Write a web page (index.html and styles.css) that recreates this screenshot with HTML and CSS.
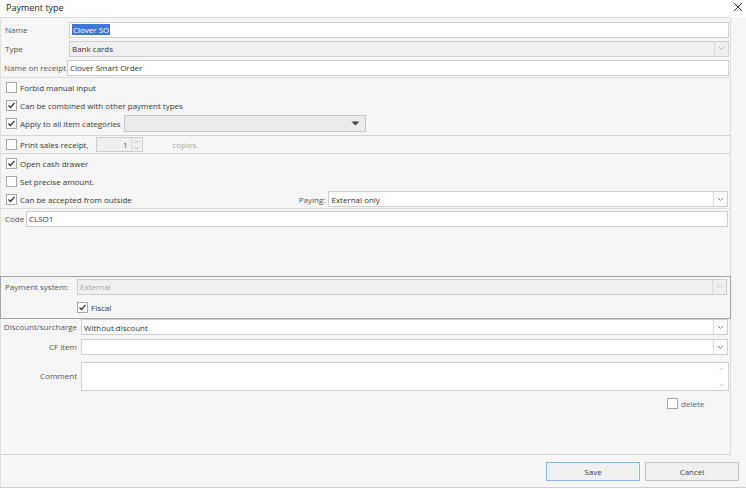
FILE: index.html
```html
<!DOCTYPE html>
<html>
<head>
<meta charset="utf-8">
<link rel="stylesheet" href="styles.css">
</head>
<body>
<div class="window">
  <div class="titlebar">
    <span class="title">Payment type</span>
    <svg class="close" width="10" height="10" viewBox="0 0 10 10"><path d="M1 1L9 9M9 1L1 9" stroke="#333" stroke-width="1" fill="none"/></svg>
  </div>
  <div class="body">
    <div class="panel">
      <div class="row top">
        <span class="lbl w-name">Name</span>
        <div class="field"><span class="sel">Clover SO</span></div>
      </div>
      <div class="row top">
        <span class="lbl w-name">Type</span>
        <div class="field disabled combo"><span class="val">Bank cards</span><span class="btn"><svg width="7" height="5" viewBox="0 0 7 5"><path d="M1 1L3.5 3.5L6 1" stroke="#bbb" fill="none"/></svg></span></div>
      </div>
      <div class="row top">
        <span class="lbl w-rcpt">Name on receipt</span>
        <div class="field"><span class="val">Clover Smart Order</span></div>
      </div>

      <div class="section sec1">
        <div class="crow"><span class="cb"></span><span class="ctext">Forbid manual input</span></div>
        <div class="crow"><span class="cb on"><svg width="9" height="9" viewBox="0 0 9 9"><path d="M1.5 4.5L3.5 6.5L7.5 1.8" stroke="#333" stroke-width="1.3" fill="none"/></svg></span><span class="ctext">Can be combined with other payment types</span></div>
        <div class="crow"><span class="cb on"><svg width="9" height="9" viewBox="0 0 9 9"><path d="M1.5 4.5L3.5 6.5L7.5 1.8" stroke="#333" stroke-width="1.3" fill="none"/></svg></span><span class="ctext">Apply to all item categories</span>
          <div class="catcombo"><svg width="9" height="5" viewBox="0 0 9 5"><path d="M0.5 0.5H8.5L4.5 4.5Z" fill="#444"/></svg></div>
        </div>
      </div>

      <div class="printrow">
        <span class="cb"></span><span class="ctext">Print sales receipt,</span>
        <div class="spin"><span class="num">1</span><span class="arrows"><svg width="7" height="12" viewBox="0 0 7 12"><path d="M1.5 4L3.5 2L5.5 4M1.5 8L3.5 10L5.5 8" stroke="#bbb" fill="none"/></svg></span></div>
        <span class="copies">copies.</span>
      </div>

      <div class="section sec2">
        <div class="crow"><span class="cb on"><svg width="9" height="9" viewBox="0 0 9 9"><path d="M1.5 4.5L3.5 6.5L7.5 1.8" stroke="#333" stroke-width="1.3" fill="none"/></svg></span><span class="ctext">Open cash drawer</span></div>
        <div class="crow"><span class="cb"></span><span class="ctext">Set precise amount.</span></div>
        <div class="crow"><span class="cb on"><svg width="9" height="9" viewBox="0 0 9 9"><path d="M1.5 4.5L3.5 6.5L7.5 1.8" stroke="#333" stroke-width="1.3" fill="none"/></svg></span><span class="ctext">Can be accepted from outside</span>
          <span class="paylbl">Paying:</span>
          <div class="field combo paying"><span class="val">External only</span><span class="btn"><svg width="7" height="5" viewBox="0 0 7 5"><path d="M1 1L3.5 3.5L6 1" stroke="#888" fill="none"/></svg></span></div>
        </div>
      </div>

      <div class="row coderow">
        <span class="lbl w-code">Code</span>
        <div class="field"><span class="val">CLSO1</span></div>
      </div>

      <div class="spacer"></div>

      <div class="paysys">
        <div class="psrow">
          <span class="lbl w-ps">Payment system:</span>
          <div class="field disabled combo"><span class="val grey">External</span><span class="btn"><svg width="7" height="5" viewBox="0 0 7 5"><path d="M1 1L3.5 3.5L6 1" stroke="#ccc" fill="none"/></svg></span></div>
        </div>
        <div class="fiscal"><span class="cb on"><svg width="9" height="9" viewBox="0 0 9 9"><path d="M1.5 4.5L3.5 6.5L7.5 1.8" stroke="#333" stroke-width="1.3" fill="none"/></svg></span><span class="ctext">Fiscal</span></div>
      </div>

      <div class="row low">
        <span class="lbl w-low">Discount/surcharge</span>
        <div class="field combo"><span class="val">Without discount</span><span class="btn"><svg width="7" height="5" viewBox="0 0 7 5"><path d="M1 1L3.5 3.5L6 1" stroke="#888" fill="none"/></svg></span></div>
      </div>
      <div class="row low">
        <span class="lbl w-low">CF item</span>
        <div class="field combo"><span class="val"></span><span class="btn"><svg width="7" height="5" viewBox="0 0 7 5"><path d="M1 1L3.5 3.5L6 1" stroke="#888" fill="none"/></svg></span></div>
      </div>
      <div class="row comment">
        <span class="lbl w-low">Comment</span>
        <div class="field area"><span class="val"></span><span class="scroll"><svg width="7" height="24" viewBox="0 0 7 24"><path d="M1.5 5L3.5 3L5.5 5M1.5 19L3.5 21L5.5 19" stroke="#ccc" fill="none"/></svg></span></div>
      </div>
      <div class="delrow"><span class="cb"></span><span class="ctext grey2">delete</span></div>
    </div>
    <div class="footer">
      <button class="b save">Save</button>
      <button class="b cancel">Cancel</button>
    </div>
  </div>
</div>
</body>
</html>
```
FILE: styles.css
```css
html, body { margin: 0; padding: 0; }
body { width: 746px; height: 489px; overflow: hidden; background: #fff; font-family: "Open Sans", "Noto Sans", sans-serif; font-size: 8px; color: #3a3a3a; }
.window { width: 746px; height: 489px; display: flex; flex-direction: column; }
.titlebar { height: 17px; flex: none; display: flex; align-items: center; justify-content: space-between; padding: 0 3px 3px 6px; box-sizing: border-box; background: #fff; }
.title { font-size: 9px; color: #222; }
.body { flex: 1; background: #f5f5f5; display: flex; flex-direction: column; border-bottom: 1px solid #cfcfcf; border-left: 1px solid #e0e0e0; margin-bottom: 1px; }
.panel { width: 729px; height: 436px; flex: none; border-right: 1px solid #dcdcdc; border-top: 1px solid #dcdcdc; border-bottom: 1px solid #d4d4d4; display: flex; flex-direction: column; }
.row { display: flex; align-items: center; }
.top { height: 19px; }
.top:first-child { height: 21px; padding-top: 2px; box-sizing: border-box; }
.lbl { color: #555; white-space: nowrap; flex: none; }
.w-name { width: 64px; padding-left: 4px; }
.w-rcpt { width: 63px; padding-left: 3px; }
.w-code { width: 21px; padding-left: 4px; }
.w-ps { width: 72px; padding-left: 4px; }
.w-low { width: 76px; text-align: right; padding-right: 4px; }
.field { flex: 1; height: 16px; box-sizing: border-box; background: #fff; border: 1px solid #cfcfcf; margin-right: 1px; display: flex; align-items: center; padding-left: 2px; color: #333; }
.field .val { flex: 1; white-space: nowrap; }
.field.disabled { background: #efefef; }
.sel { background: #3b78d8; color: #fff; padding: 0 1px; line-height: 11px; }
.combo .btn { width: 13px; height: 14px; border-left: 1px solid #dcdcdc; display: flex; align-items: center; justify-content: center; }
.section { border-top: 1px solid #dcdcdc; display: flex; flex-direction: column; }
.sec1 { padding-bottom: 3px; }
.crow { height: 18px; display: flex; align-items: center; padding-left: 5px; }
.cb { width: 11px; height: 11px; box-sizing: border-box; border: 1px solid #a8a8a8; background: #fff; display: inline-flex; align-items: center; justify-content: center; flex: none; }
.ctext { margin-left: 3px; white-space: nowrap; }
.catcombo { width: 242px; height: 17px; box-sizing: border-box; margin-left: 4px; border: 1px solid #c8c8c8; background: #ebebeb; display: flex; align-items: center; justify-content: flex-end; padding-right: 5px; }
.printrow { height: 19px; box-sizing: border-box; border-top: 1px solid #d4d4d4; border-bottom: 1px solid #d4d4d4; display: flex; align-items: center; padding-left: 5px; }
.spin { width: 47px; height: 15px; box-sizing: border-box; margin-left: 7px; border: 1px solid #d0d0d0; background: #efefef; display: flex; align-items: center; justify-content: flex-end; }
.spin .num { color: #666; margin-right: 3px; }
.spin .arrows { width: 10px; height: 13px; border-left: 1px solid #d8d8d8; display: flex; align-items: center; justify-content: center; }
.copies { margin-left: 30px; color: #aaa; }
.sec2 { border-top: none; padding-bottom: 0; }
.paylbl { margin-left: 167px; color: #555; margin-right: 3px; }
.paying { height: 16px; margin-right: 2px; }
.coderow { height: 19px; border-top: 1px solid #dcdcdc; }
.coderow .field { margin-right: 2px; }
.spacer { height: 48px; flex: none; }
.paysys { width: 731px; height: 43px; flex: none; box-sizing: border-box; border: 1px solid #a5a5a5; display: flex; flex-direction: column; margin-left: -1px; }
.psrow { height: 19px; display: flex; align-items: center; }
.psrow .field { margin-right: 3px; }
.grey { color: #aaa; }
.fiscal { height: 18px; display: flex; align-items: center; padding-left: 76px; padding-top: 2px; }
.low { height: 20px; align-items: flex-start; box-sizing: border-box; }
.low .lbl { line-height: 16px; }
.low .field { margin-right: 2px; }
.comment { height: 34px; align-items: flex-start; padding-top: 3px; box-sizing: border-box; }
.comment .lbl { line-height: 27px; }
.area { height: 29px; align-items: stretch; }
.area .scroll { width: 13px; display: flex; align-items: center; justify-content: center; }
.delrow { display: flex; align-items: center; padding-left: 666px; height: 16px; margin-top: 2px; }
.grey2 { color: #666; }
.footer { flex: 1; display: flex; justify-content: flex-end; align-items: center; gap: 5px; padding-right: 7px; }
.b { width: 94px; height: 19px; font-family: inherit; font-size: 8px; color: #444; background: #efefef; border: 1px solid #c4c4c4; padding: 0; }
.b.save { border-color: #8fb4e3; background: #f0f0f0; }
```
